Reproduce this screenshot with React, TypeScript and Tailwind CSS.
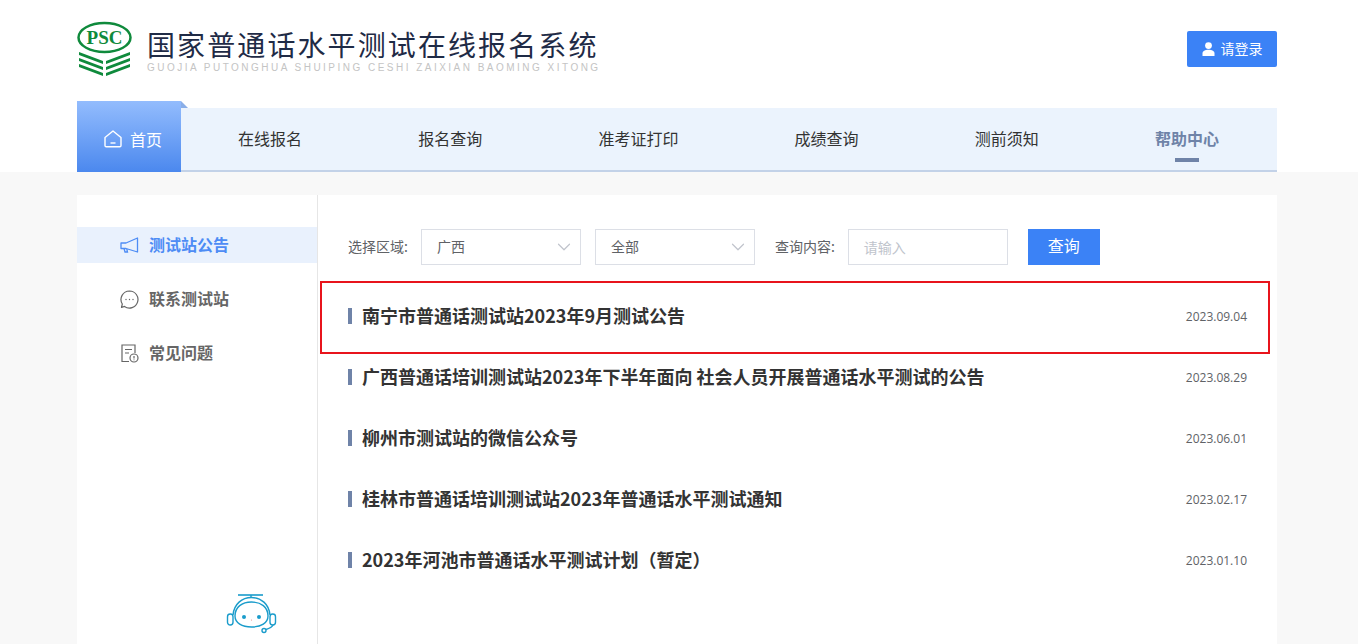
import { ChevronDown } from "lucide-react";

const navItems = ["在线报名", "报名查询", "准考证打印", "成绩查询", "测前须知", "帮助中心"];

const notices = [
  { title: "南宁市普通话测试站2023年9月测试公告", date: "2023.09.04" },
  { title: "广西普通话培训测试站2023年下半年面向 社会人员开展普通话水平测试的公告", date: "2023.08.29" },
  { title: "柳州市测试站的微信公众号", date: "2023.06.01" },
  { title: "桂林市普通话培训测试站2023年普通话水平测试通知", date: "2023.02.17" },
  { title: "2023年河池市普通话水平测试计划（暂定）", date: "2023.01.10" },
];

function Logo() {
  return (
    <svg width="56" height="56" viewBox="0 0 56 56" fill="none" className="shrink-0">
      <ellipse cx="27.5" cy="16.5" rx="26" ry="14.5" stroke="#0f8a3c" strokeWidth="2.5" />
      <text x="27.5" y="23" textAnchor="middle" fill="#0f8a3c" fontFamily="'Liberation Serif', serif" fontWeight="700" fontSize="19">
        PSC
      </text>
      <path d="M2 31 L26 40 L26 43 L2 34 Z M53 31 L29 40 L29 43 L53 34 Z" fill="#0f8a3c" />
      <path d="M2 37 L26 46 L26 49 L2 40 Z M53 37 L29 46 L29 49 L53 40 Z" fill="#0f8a3c" />
      <path d="M2 43 L26 52 L26 55 L2 46 Z M53 43 L29 52 L29 55 L53 46 Z" fill="#0f8a3c" />
    </svg>
  );
}

function RobotIcon() {
  return (
    <svg width="52" height="46" viewBox="0 0 52 46" fill="none" stroke="#1a9ccb" strokeWidth="1.4">
      <path d="M12 3 H37" strokeWidth="1.6" />
      <path d="M25 3 V6" />
      <path d="M7 23 C8 12 16 5.5 25.5 5.5 C35 5.5 43 12 44 23" />
      <path d="M9 24 C9 15 16 10 25.5 10 C35 10 42 15 42 24 C42 31 35 35 25.5 35 C16 35 9 31 9 24 Z" />
      <rect x="1.5" y="22" width="5.5" height="11" rx="2.7" />
      <rect x="44" y="22" width="5.5" height="11" rx="2.7" />
      <path d="M47 33 C46 35 43 36.5 40 37.5" />
      <circle cx="38" cy="38.5" r="2" />
      <circle cx="18" cy="25" r="2" fill="#1a9ccb" stroke="none" />
      <circle cx="33" cy="25" r="2" fill="#1a9ccb" stroke="none" />
      <circle cx="25.5" cy="28" r="0.6" fill="#e88" stroke="none" />
    </svg>
  );
}

function SelectBox({ label }: { label: string }) {
  return (
    <div className="flex h-9 w-40 items-center justify-between border border-[#dcdfe6] pl-[15px] pr-[5px] text-[14px] text-[#606266]">
      <span className="pb-[2px]">{label}</span>
      <ChevronDown size={22} strokeWidth={1.3} className="text-[#c0c4cc]" />
    </div>
  );
}

export default function App() {
  return (
    <div className="relative h-[644px] overflow-hidden bg-[#f8f8f8] font-['Noto_Sans_CJK_SC','Noto_Sans',sans-serif]">
      {/* Header + nav on white */}
      <div className="bg-white">
        <div className="ml-[77px] w-[1200px]">
          <div className="flex h-[101px] items-start justify-between">
            <div className="flex items-start pt-[21px]">
              <Logo />
              <div className="ml-[14px] pt-[6px]">
                <div className="whitespace-nowrap text-[28px] leading-[34px] tracking-[2.1px] text-[#1f2b46]">
                  国家普通话水平测试在线报名系统
                </div>
                <div className="mt-px whitespace-nowrap font-['Liberation_Sans',sans-serif] text-[10px] leading-[12px] tracking-[2.48px] text-[#c4c4c4]">
                  GUOJIA PUTONGHUA SHUIPING CESHI ZAIXIAN BAOMING XITONG
                </div>
              </div>
            </div>
            <button className="mt-[31px] flex h-9 w-[90px] items-center justify-center gap-[6px] rounded-[2px] bg-[#3b82f6] text-[14px] text-white">
              <svg width="13" height="14" viewBox="0 0 13 14" fill="white">
                <circle cx="6.5" cy="3.6" r="3.4" />
                <path d="M0.5 14 V11.5 C0.5 9 3 7.8 6.5 7.8 C10 7.8 12.5 9 12.5 11.5 V14 Z" />
              </svg>
              <span className="pb-[2px]">请登录</span>
            </button>
          </div>

          <div className="relative flex h-[71px]">
            <div className="z-10 flex h-[71px] w-[104px] items-center gap-2 bg-gradient-to-b from-[#93bcfd] to-[#4b88ee] pl-[27px] pt-1 text-[16px] text-white">
              <svg width="18" height="18" viewBox="0 0 18 18" fill="none" stroke="white" strokeWidth="1.4">
                <path d="M1 7.5 L9 1 L17 7.5 V15.5 A1.2 1.2 0 0 1 15.8 16.7 H2.2 A1.2 1.2 0 0 1 1 15.5 Z" strokeLinejoin="round" />
                <path d="M6.5 13 H11.5" />
              </svg>
              首页
            </div>
            {/* folded corner */}
            <div className="absolute left-[104px] top-0 h-0 w-0 border-b-[7px] border-r-[7px] border-b-[#8aaee8] border-r-transparent" />
            <div className="mt-[7px] flex h-16 flex-1 items-center border-b-2 border-[#c3d2e8] bg-[#ebf3fd] pb-[2px] pl-[57px] pr-[58px]">
              <div className="flex w-full items-center justify-between text-[16px] text-[#333]">
                {navItems.map((item, i) =>
                  i === navItems.length - 1 ? (
                    <div key={item} className="relative font-bold text-[#6f83a8]">
                      {item}
                      <div className="absolute left-1/2 top-[32px] h-1 w-6 -translate-x-1/2 bg-[#6f83a8]" />
                    </div>
                  ) : (
                    <div key={item}>{item}</div>
                  )
                )}
              </div>
            </div>
          </div>
        </div>
      </div>

      {/* Main card */}
      <div className="ml-[77px] mt-[23px] flex h-[460px] w-[1200px] bg-white">
        <aside className="flex w-[241px] shrink-0 flex-col border-r border-[#e6e6e6] pt-8">
          <div className="flex h-9 items-center bg-[#e9f1fd] pl-[43px] text-[16px] font-bold text-[#4d8cf5]">
            <svg width="19" height="17" viewBox="0 0 19 17" fill="none" stroke="#4d8cf5" strokeWidth="1.3" className="mr-[10px]">
              <path d="M17.5 1 V15 L6 11.5 H1 V6 H6 Z" strokeLinejoin="round" />
              <path d="M4 11.5 L5 15 H7.5 L6.8 12" />
            </svg>
            <span className="pb-[2px]">测试站公告</span>
          </div>
          <div className="mt-[18px] flex h-9 items-center pl-[43px] text-[16px] font-bold text-[#666]">
            <svg width="19" height="19" viewBox="0 0 19 19" fill="none" stroke="#666" strokeWidth="1.2" className="mr-[10px]">
              <path d="M9.5 1 A8.5 8.5 0 1 1 4.5 16.4 L1.5 17.5 L2.3 14 A8.5 8.5 0 0 1 9.5 1 Z" strokeLinejoin="round" />
              <circle cx="6" cy="9.5" r="0.7" fill="#666" stroke="none" />
              <circle cx="9.5" cy="9.5" r="0.7" fill="#666" stroke="none" />
              <circle cx="13" cy="9.5" r="0.7" fill="#666" stroke="none" />
            </svg>
            <span className="pb-[2px]">联系测试站</span>
          </div>
          <div className="mt-[18px] flex h-9 items-center pl-[44px] text-[16px] font-bold text-[#666]">
            <svg width="18" height="19" viewBox="0 0 18 19" fill="none" stroke="#666" strokeWidth="1.2" className="mr-[10px]">
              <path d="M8 17.5 H1 V1 H14 V9" />
              <path d="M4 5.5 H11 M4 9 H8" />
              <circle cx="13" cy="14" r="4" />
              <path d="M13 12 V14.5 M13 15.5 V16.2" />
            </svg>
            <span className="pb-[2px]">常见问题</span>
          </div>
          <div className="mb-[17px] mt-auto flex justify-center pl-[110px]">
            <RobotIcon />
          </div>
        </aside>

        <main className="flex-1 pl-[30px] pr-[30px] pt-[34px]">
          <div className="flex items-center text-[14px] text-[#606266]">
            <span className="mr-[13px] pb-[2px]">选择区域:</span>
            <SelectBox label="广西" />
            <div className="ml-[14px]">
              <SelectBox label="全部" />
            </div>
            <span className="ml-5 mr-[13px] pb-[2px]">查询内容:</span>
            <div className="flex h-9 w-40 items-center border border-[#dcdfe6] pl-[15px] text-[#c0c4cc]">请输入</div>
            <button className="ml-5 h-9 w-[72px] bg-[#3b82f6] pb-1 text-[16px] text-white">查询</button>
          </div>

          <ul className="mt-[21px]">
            {notices.map((notice) => (
              <li key={notice.date} className="flex h-[61px] items-center justify-between">
                <div className="flex items-center pb-[2px]">
                  <span className="mr-[10px] h-4 w-1 bg-[#6f83a8]" />
                  <span className="text-[18px] font-bold text-[#333]">{notice.title}</span>
                </div>
                <span className="font-['Open_Sans',sans-serif] text-[12px] text-[#606266]">{notice.date}</span>
              </li>
            ))}
          </ul>
        </main>
      </div>

      {/* Red annotation over the first row */}
      <div className="pointer-events-none absolute left-[320px] top-[281px] h-[73px] w-[950px] border-2 border-[#e8141c]" />
    </div>
  );
}
